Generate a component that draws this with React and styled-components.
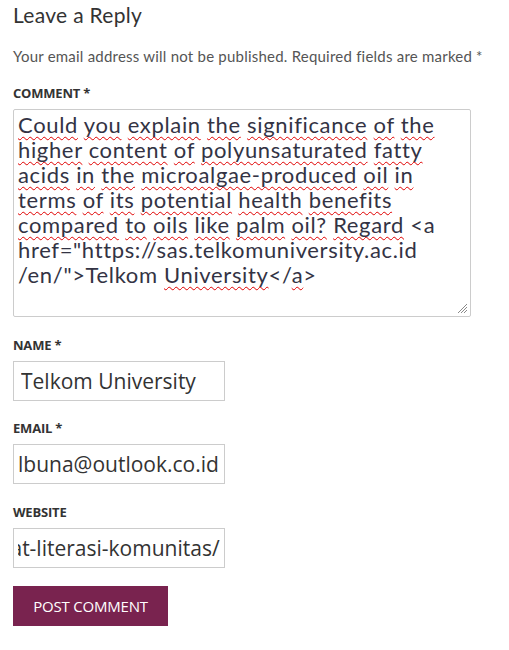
import { useEffect, useRef } from "react";
import styled, { createGlobalStyle } from "styled-components";

const GlobalStyle = createGlobalStyle`
  html, body {
    margin: 0;
    padding: 0;
    background: #ffffff;
  }
`;

// each line of the comment as the browser wrapped it; true = flagged by spellcheck
const commentLines = [
  [["Could", true], ["you", true], ["explain", true], ["the", true], ["significance", true], ["of", true], ["the", true]],
  [["higher", true], ["content", true], ["of", true], ["polyunsaturated", true], ["fatty", true]],
  [["acids", true], ["in", true], ["the", true], ["microalgae-produced", true], ["oil", true], ["in", true]],
  [["terms", true], ["of", true], ["its", true], ["potential", true], ["health", true], ["benefits", true]],
  [["compared", true], ["to", true], ["oils", true], ["like", true], ["palm", true], ["oil?", true], ["Regard", true], ["<a", false]],
  [['href="https://sas.telkomuniversity.ac.id', false]],
];

export default function App() {
  const websiteRef = useRef(null);

  useEffect(() => {
    const el = websiteRef.current;
    if (el) el.scrollLeft = el.scrollWidth;
  }, []);

  return (
    <>
      <GlobalStyle />
      <ReplyStyled>
        <h3 className="title">Leave a Reply</h3>
        <p className="notes">
          Your email address will not be published. Required fields are marked *
        </p>

        <Field $top={18}>
          <Label>COMMENT *</Label>
          <CommentBox>
            {commentLines.map((line, i) => (
              <CommentLine key={i}>
                {line.map(([word, flagged], j) => (
                  <span key={j}>
                    {j > 0 && " "}
                    {flagged ? <Misspelled>{word}</Misspelled> : word}
                  </span>
                ))}
              </CommentLine>
            ))}
            <CommentLine>
              /en/"&gt;Telkom <Misspelled>University</Misspelled>&lt;/<Misspelled>a</Misspelled>&gt;
            </CommentLine>
            <Grip width="11" height="11" viewBox="0 0 11 11">
              <path d="M10 1 L1 10 M10 4 L4 10 M10 7 L7 10" stroke="#8a8a8a" strokeWidth="1" />
            </Grip>
          </CommentBox>
        </Field>

        <Field $top={20}>
          <Label>NAME *</Label>
          <TextInput type="text" defaultValue="Telkom University" readOnly $pad={7} />
        </Field>

        <Field $top={19}>
          <Label>EMAIL *</Label>
          <TextInput type="email" defaultValue="lbuna@outlook.co.id" readOnly $pad={4} />
        </Field>

        <Field $top={20}>
          <Label>WEBSITE</Label>
          <TextInput
            ref={websiteRef}
            type="url"
            defaultValue="https://sas.telkomuniversity.ac.id/en/meningkat-literasi-komunitas/"
            readOnly
            $pad={4}
          />
        </Field>

        <SubmitButton type="button">POST COMMENT</SubmitButton>
      </ReplyStyled>
    </>
  );
}

const ReplyStyled = styled.div`
  padding: 0 13px 24px;
  color: #333333;
  font-family: Lato, "Open Sans", sans-serif;

  .title {
    margin: 0;
    padding-top: 2px;
    font-size: 21px;
    line-height: 26px;
    font-weight: 400;
    letter-spacing: 0.3px;
    color: #333333;
  }

  .notes {
    margin: 17px 0 0;
    font-size: 15px;
    line-height: 22px;
    letter-spacing: 0.22px;
    white-space: nowrap;
    color: #555555;
  }
`;

const Field = styled.div`
  display: flex;
  flex-direction: column;
  gap: 7px;
  margin-top: ${(p) => p.$top}px;
`;

const Label = styled.label`
  font-family: "Open Sans", "Noto Sans", sans-serif;
  font-size: 13px;
  font-weight: 700;
  line-height: 17px;
  color: #333333;
  letter-spacing: -0.2px;
`;

const CommentBox = styled.div`
  position: relative;
  box-sizing: border-box;
  width: 458px;
  height: 208px;
  padding: 2px 4px;
  border: 1px solid #cccccc;
  border-radius: 2px;
  font-family: Lato, sans-serif;
  font-size: 22px;
  line-height: 25px;
  letter-spacing: 0.65px;
  color: #333344;
`;

const CommentLine = styled.div`
  white-space: pre;
`;

const Misspelled = styled.span`
  text-decoration: underline wavy #e00000;
  text-decoration-thickness: 1px;
  text-underline-offset: 3px;
  text-decoration-skip-ink: none;
`;

const Grip = styled.svg`
  position: absolute;
  right: 2px;
  bottom: 2px;
`;

const TextInput = styled.input`
  box-sizing: border-box;
  width: 212px;
  height: 40px;
  padding: 0 ${(p) => p.$pad}px;
  border: 1px solid #cccccc;
  border-radius: 0;
  font-family: "Open Sans", "Noto Sans", sans-serif;
  font-size: 21px;
  color: #333333;
  background: #ffffff;
  outline: none;
`;

const SubmitButton = styled.button`
  margin-top: 18px;
  width: 155px;
  height: 40px;
  border: none;
  border-radius: 0;
  background-color: #79234f;
  color: #ffffff;
  font-family: "Open Sans", "Noto Sans", sans-serif;
  font-size: 15px;
  letter-spacing: -0.2px;
  cursor: pointer;
`;
